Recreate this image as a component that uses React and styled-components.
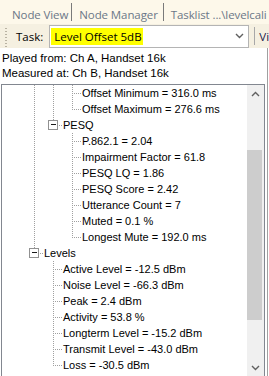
import React from "react";
import styled, { createGlobalStyle } from "styled-components";

const GlobalStyle = createGlobalStyle`
  html, body {
    margin: 0;
    padding: 0;
    background: #ffffff;
    overflow: hidden;
  }
  body {
    width: 269px;
    height: 376px;
  }
`;

const Page = styled.div`
  width: 269px;
  height: 376px;
  display: flex;
  flex-direction: column;
  overflow: hidden;
  background: #ffffff;
`;

/* ---- tab strip ---- */
const TabStrip = styled.div`
  height: 24px;
  flex: none;
  box-sizing: border-box;
  padding: 4px 0 0 12px;
  display: flex;
  align-items: center;
  background: #fdf8ea;
  font-family: "Open Sans", "Noto Sans", sans-serif;
  font-size: 11.5px;
  letter-spacing: -0.1px;
  color: #6b7787;
  white-space: nowrap;
  overflow: hidden;
`;

const Tab = styled.div`
  display: flex;
  align-items: center;
  height: 100%;
  padding-right: ${(p) => p.$pr || 0}px;
`;

const TabSep = styled.div`
  width: 1px;
  height: 18px;
  margin: -4px 7px 0 0;
  background: #7a7a7a;
  flex: none;
`;

/* ---- toolbar ---- */
const Toolbar = styled.div`
  height: 24px;
  flex: none;
  display: flex;
  align-items: center;
  background: #f5f0e1;
  font-family: "Open Sans", "Noto Sans", sans-serif;
  font-size: 11.5px;
  color: #000;
  white-space: nowrap;
  overflow: hidden;
`;

const Grip = styled.div`
  width: 2px;
  height: 19px;
  margin: 3px 9px 0 5px;
  background-image: linear-gradient(#b8b2a2 50%, transparent 50%);
  background-size: 2px 3px;
  flex: none;
`;

const Label = styled.span`
  margin-right: 6px;
`;

const Combo = styled.div`
  width: 200px;
  height: 23px;
  box-sizing: border-box;
  border: 1px solid #b4b4b4;
  background: #ffffff;
  display: flex;
  align-items: center;
  justify-content: space-between;
  padding: 0 4px 0 1px;
  flex: none;
`;

const Highlight = styled.span`
  background: #ffff00;
  height: 17px;
  line-height: 17px;
  padding: 0 3px 0 3px;
  width: 86px;
`;

const ToolSep = styled.div`
  width: 1px;
  height: 18px;
  background: #a8a8a8;
  margin: 0 4px 0 5px;
  flex: none;
`;

const Cut = styled.span`
  color: #1c1c4c;
`;

/* ---- body ---- */
const Body = styled.div`
  flex: 1;
  display: flex;
  min-height: 0;
`;

const LeftCol = styled.div`
  width: 265px;
  flex: none;
  display: flex;
  flex-direction: column;
`;

const Info = styled.div`
  padding: 3px 0 0 2px;
  font-family: "Liberation Sans", Arial, sans-serif;
  font-size: 11.5px;
  line-height: 15px;
  color: #000;
  white-space: nowrap;
`;

const EdgeLine = styled.div`
  width: 1px;
  margin-left: 2px;
  background: #a0a0a0;
  flex: none;
`;

const TreePanel = styled.div`
  margin: 3px 0 0 1px;
  width: 264px;
  height: 293px;
  box-sizing: border-box;
  border: 1px solid #828790;
  display: flex;
  flex: none;
  overflow: hidden;
`;

const TreeList = styled.div`
  flex: 1;
  padding-left: 23px;
  overflow: hidden;
  font-family: "Liberation Sans", Arial, sans-serif;
  font-size: 11px;
  color: #000;
`;

const Row = styled.div`
  height: 16px;
  display: flex;
  align-items: center;
  white-space: nowrap;
`;

const RowText = styled.span`
  line-height: 16px;
`;

const Scrollbar = styled.div`
  width: 17px;
  flex: none;
  display: flex;
  flex-direction: column;
  background: #f0f0f0;
`;

const ScrollBtn = styled.div`
  height: 17px;
  flex: none;
  display: flex;
  align-items: center;
  justify-content: center;
`;

const Track = styled.div`
  flex: 1;
  padding: 48px 2px 0 0;
`;

const Thumb = styled.div`
  height: 170px;
  width: 15px;
  background: #cdcdcd;
`;

/* ---- tree connector drawing ---- */
const DOT = "#a0a0a0";

function Guide({ kind }) {
  const vDots = (from, to) =>
    Array.from({ length: Math.ceil((to - from) / 2) }, (_, i) => (
      <rect key={"v" + i} x={9} y={from + i * 2} width={1} height={1} fill={DOT} />
    ));
  const hDots = (from, to) =>
    Array.from({ length: Math.ceil((to - from) / 2) }, (_, i) => (
      <rect key={"h" + i} x={from + i * 2} y={8} width={1} height={1} fill={DOT} />
    ));
  let parts = null;
  if (kind === "pipe") parts = vDots(0, 16);
  if (kind === "tee") parts = [...vDots(0, 16), ...hDots(11, 19)];
  if (kind === "elbow") parts = [...vDots(0, 9), ...hDots(11, 19)];
  if (kind === "box")
    parts = [
      ...vDots(0, 4),
      <rect key="b" x={4.5} y={3.5} width={9} height={9} fill="#fff" stroke="#919191" />,
      <rect key="m" x={7} y={7} width={5} height={1} fill="#1a1a1a" />,
      ...hDots(15, 19),
    ];
  return (
    <svg width="19" height="16" viewBox="0 0 19 16" shapeRendering="crispEdges" style={{ flex: "none" }}>
      {parts}
    </svg>
  );
}

function Chevron({ up }) {
  return (
    <svg width="9" height="6" viewBox="0 0 9 6">
      <polyline
        points={up ? "1,5 4.5,1.5 8,5" : "1,1 4.5,4.5 8,1"}
        fill="none"
        stroke="#606060"
        strokeWidth="1.4"
      />
    </svg>
  );
}

const rows = [
  { g: ["pipe", "pipe", "tee"], t: "Offset Minimum = 316.0 ms" },
  { g: ["pipe", "pipe", "elbow"], t: "Offset Maximum = 276.6 ms" },
  { g: ["pipe", "box"], t: "PESQ" },
  { g: ["pipe", "blank", "tee"], t: "P.862.1 = 2.04" },
  { g: ["pipe", "blank", "tee"], t: "Impairment Factor = 61.8" },
  { g: ["pipe", "blank", "tee"], t: "PESQ LQ = 1.86" },
  { g: ["pipe", "blank", "tee"], t: "PESQ Score = 2.42" },
  { g: ["pipe", "blank", "tee"], t: "Utterance Count = 7" },
  { g: ["pipe", "blank", "tee"], t: "Muted = 0.1 %" },
  { g: ["pipe", "blank", "elbow"], t: "Longest Mute = 192.0 ms" },
  { g: ["box"], t: "Levels" },
  { g: ["blank", "tee"], t: "Active Level = -12.5 dBm" },
  { g: ["blank", "tee"], t: "Noise Level = -66.3 dBm" },
  { g: ["blank", "tee"], t: "Peak = 2.4 dBm" },
  { g: ["blank", "tee"], t: "Activity = 53.8 %" },
  { g: ["blank", "tee"], t: "Longterm Level = -15.2 dBm" },
  { g: ["blank", "tee"], t: "Transmit Level = -43.0 dBm" },
  { g: ["blank", "elbow"], t: "Loss = -30.5 dBm" },
];

export default function App() {
  return (
    <Page>
      <GlobalStyle />
      <TabStrip>
        <Tab $pr={3}>Node View</Tab>
        <TabSep />
        <Tab $pr={5}>Node Manager</Tab>
        <TabSep />
        <Tab>Tasklist ...\levelcali</Tab>
      </TabStrip>
      <Toolbar>
        <Grip />
        <Label>Task:</Label>
        <Combo>
          <Highlight>Level Offset 5dB</Highlight>
          <Chevron />
        </Combo>
        <ToolSep />
        <Cut>Vi</Cut>
      </Toolbar>
      <Body>
        <LeftCol>
          <Info>
            <div>Played from: Ch A, Handset 16k</div>
            <div>Measured at: Ch B, Handset 16k</div>
          </Info>
          <TreePanel>
            <TreeList>
              {rows.map((r, i) => (
                <Row key={i}>
                  {r.g.map((k, j) => (
                    <Guide key={j} kind={k} />
                  ))}
                  <RowText>{r.t}</RowText>
                </Row>
              ))}
            </TreeList>
            <Scrollbar>
              <ScrollBtn>
                <Chevron up />
              </ScrollBtn>
              <Track>
                <Thumb />
              </Track>
              <ScrollBtn>
                <Chevron />
              </ScrollBtn>
            </Scrollbar>
          </TreePanel>
        </LeftCol>
        <EdgeLine />
      </Body>
    </Page>
  );
}
